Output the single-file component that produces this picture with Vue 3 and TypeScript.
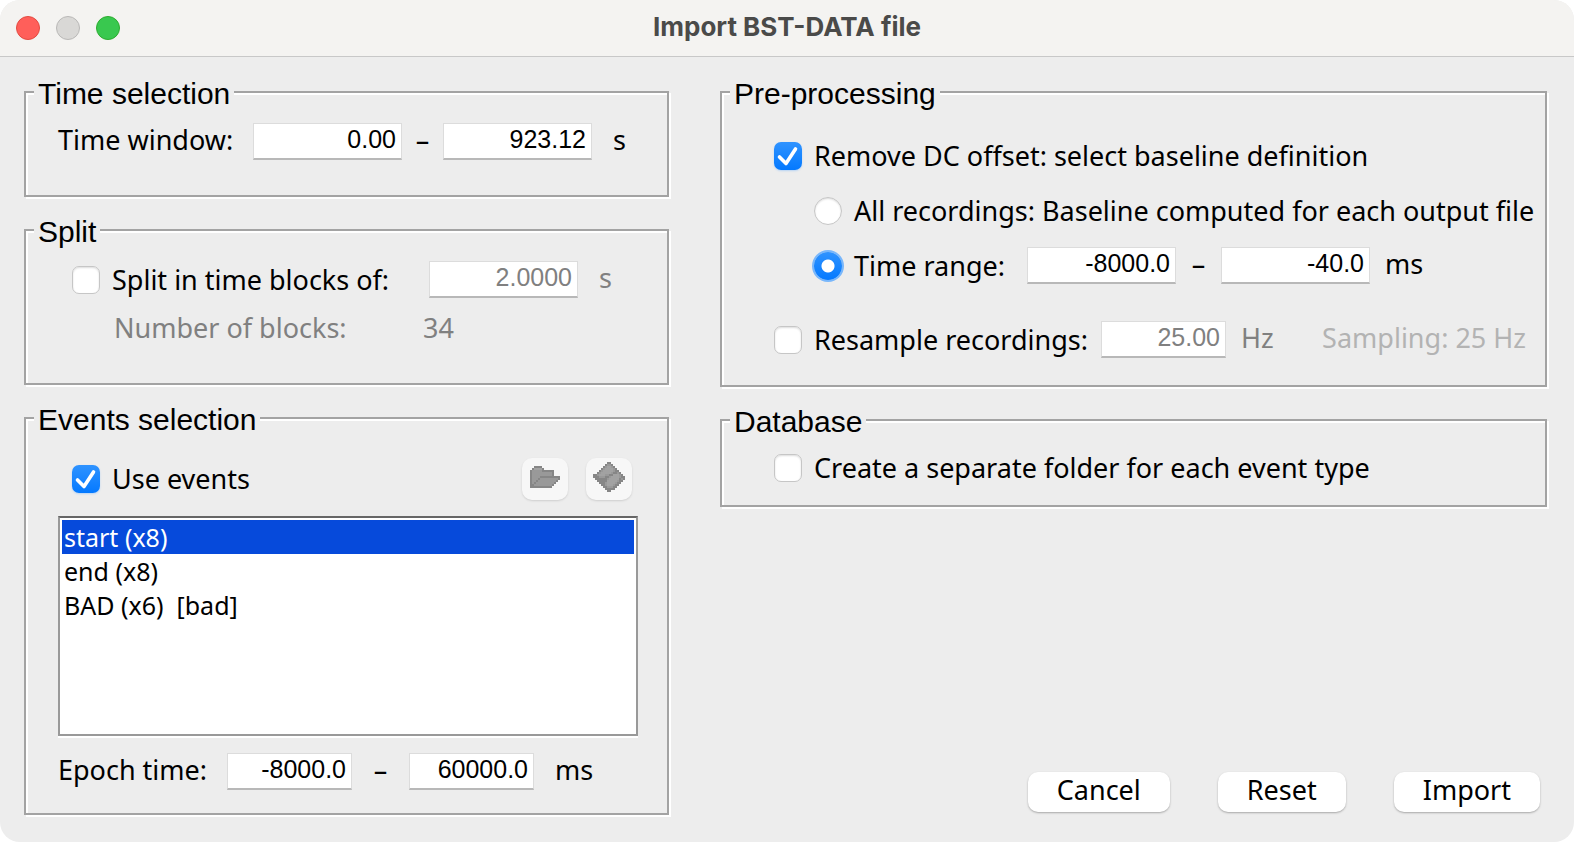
<script setup lang="ts">
import { reactive } from 'vue'

const form = reactive({
  timeStart: '0.00',
  timeEnd: '923.12',
  split: false,
  blockLength: '2.0000',
  blockCount: 34,
  useEvents: true,
  selectedEvents: ['start'],
  epochStart: '-8000.0',
  epochEnd: '60000.0',
  removeDc: true,
  baseline: 'range',
  baselineStart: '-8000.0',
  baselineEnd: '-40.0',
  resample: false,
  rate: '25.00',
  separateFolders: false,
})

const events = [
  { id: 'start', label: 'start (x8)' },
  { id: 'end', label: 'end (x8)' },
  { id: 'bad', label: 'BAD (x6)\u00a0 [bad]' },
]

interface Pixel {
  x: number
  y: number
  tone: string
}

// d = outline, m = body, l = highlight
function toPixels(rows: string[]): Pixel[] {
  return rows.flatMap((row, y) =>
    [...row].map((tone, x) => ({ x, y, tone })).filter((p) => p.tone !== '.'),
  )
}

const folderIcon = toPixels([
  '..dddd.........',
  '.dlllld........',
  'dmmmmmdddddd...',
  'dmmmmmmmmmmd...',
  'dmmmmmmmmmmd...',
  'dmmmmdddddddddd',
  'dmmmdmmmmmmmmmd',
  'dmmdmmmmmmmmmd.',
  'dmdmmmmmmmmmd..',
  'ddmmmmmmmmmd...',
  'ddddddddddd....',
])

const matrixIcon = toPixels([
  '.......dd.......',
  '......dmmd......',
  '.....dmllmd.....',
  '....dmllllmd....',
  '...dmlllllmdd...',
  '..dmlllllmddmd..',
  'ddmlllmmddlllmd.',
  'dddmmmddmllllmdd',
  '.ddddddmllllldmd',
  '..dddddlllllmdd.',
  '...dddmllllmdd..',
  '....ddmlllmdd...',
  '.....ddmmmdd....',
  '......ddddd.....',
  '.......dd.......',
])
</script>

<template>
  <div class="window">
    <header class="titlebar">
      <div class="lights">
        <button type="button" class="light close" aria-label="Close"></button>
        <button type="button" class="light minimize" aria-label="Minimize" disabled></button>
        <button type="button" class="light zoom" aria-label="Zoom"></button>
      </div>
      <h1>Import BST-DATA file</h1>
    </header>

    <main class="content">
      <div class="column">
        <fieldset class="group time-group">
          <legend>Time selection</legend>
          <div class="row">
            <label class="time-label" for="time-start">Time window:</label>
            <input id="time-start" v-model="form.timeStart" class="field" type="text" />
            <span class="dash">–</span>
            <input v-model="form.timeEnd" class="field" type="text" aria-label="Time window end" />
            <span class="unit far">s</span>
          </div>
        </fieldset>

        <fieldset class="group split-group">
          <legend>Split</legend>
          <div class="row indent">
            <span class="tick">
              <input id="split" v-model="form.split" type="checkbox" />
              <svg viewBox="0 0 28 28"><path d="M5.5 15 L12 21.5 L21.5 7" /></svg>
            </span>
            <label class="split-label" for="split">Split in time blocks of:</label>
            <input v-model="form.blockLength" class="field" type="text" aria-label="Block length" disabled />
            <span class="unit far muted">s</span>
          </div>
          <div class="row count muted">
            <span class="count-label">Number of blocks:</span>
            <output>{{ form.blockCount }}</output>
          </div>
        </fieldset>

        <fieldset class="group events-group">
          <legend>Events selection</legend>
          <div class="row events-head indent">
            <span class="tick">
              <input id="use-events" v-model="form.useEvents" type="checkbox" />
              <svg viewBox="0 0 28 28"><path d="M5.5 15 L12 21.5 L21.5 7" /></svg>
            </span>
            <label for="use-events">Use events</label>
            <div class="tools">
              <button type="button" class="tool" aria-label="Open events file" disabled>
                <svg class="pixels" width="30" height="22" viewBox="0 0 15 11">
                  <rect v-for="p in folderIcon" :key="`${p.x}-${p.y}`" :class="p.tone" :x="p.x" :y="p.y" width="1" height="1" />
                </svg>
              </button>
              <button type="button" class="tool" aria-label="Import from Matlab" disabled>
                <svg class="pixels" width="32" height="30" viewBox="0 0 16 15">
                  <rect v-for="p in matrixIcon" :key="`${p.x}-${p.y}`" :class="p.tone" :x="p.x" :y="p.y" width="1" height="1" />
                </svg>
              </button>
            </div>
          </div>
          <select v-model="form.selectedEvents" class="list" multiple aria-label="Events">
            <option v-for="e in events" :key="e.id" :value="e.id">{{ e.label }}</option>
          </select>
          <div class="row">
            <label class="epoch-label" for="epoch-start">Epoch time:</label>
            <input id="epoch-start" v-model="form.epochStart" class="field short" type="text" />
            <span class="dash wide">–</span>
            <input v-model="form.epochEnd" class="field short" type="text" aria-label="Epoch time end" />
            <span class="unit far">ms</span>
          </div>
        </fieldset>
      </div>

      <div class="column">
        <fieldset class="group pre-group">
          <legend>Pre-processing</legend>
          <div class="row">
            <span class="tick">
              <input id="remove-dc" v-model="form.removeDc" type="checkbox" />
              <svg viewBox="0 0 28 28"><path d="M5.5 15 L12 21.5 L21.5 7" /></svg>
            </span>
            <label for="remove-dc">Remove DC offset: select baseline definition</label>
          </div>
          <div class="row nested">
            <input id="base-all" v-model="form.baseline" class="radio" type="radio" name="baseline" value="all" />
            <label for="base-all">All recordings: Baseline computed for each output file</label>
          </div>
          <div class="row nested">
            <input id="base-range" v-model="form.baseline" class="radio" type="radio" name="baseline" value="range" />
            <label class="range-label" for="base-range">Time range:</label>
            <input v-model="form.baselineStart" class="field" type="text" aria-label="Baseline start" />
            <span class="dash">–</span>
            <input v-model="form.baselineEnd" class="field" type="text" aria-label="Baseline end" />
            <span class="unit">ms</span>
          </div>
          <div class="row resample">
            <span class="tick">
              <input id="resample" v-model="form.resample" type="checkbox" />
              <svg viewBox="0 0 28 28"><path d="M5.5 15 L12 21.5 L21.5 7" /></svg>
            </span>
            <label class="resample-label" for="resample">Resample recordings:</label>
            <input v-model="form.rate" class="field short" type="text" aria-label="New sampling rate" disabled />
            <span class="unit muted">Hz</span>
            <span class="sampling">Sampling: 25 Hz</span>
          </div>
        </fieldset>

        <fieldset class="group database-group">
          <legend>Database</legend>
          <div class="row">
            <span class="tick">
              <input id="folders" v-model="form.separateFolders" type="checkbox" />
              <svg viewBox="0 0 28 28"><path d="M5.5 15 L12 21.5 L21.5 7" /></svg>
            </span>
            <label for="folders">Create a separate folder for each event type</label>
          </div>
        </fieldset>

        <footer class="actions">
          <button type="button" class="push">Cancel</button>
          <button type="button" class="push">Reset</button>
          <button type="button" class="push">Import</button>
        </footer>
      </div>
    </main>
  </div>
</template>

<style>
body {
  margin: 0;
  background: #fff;
}
</style>

<style scoped>
* {
  box-sizing: border-box;
}

.window {
  display: flex;
  flex-direction: column;
  min-height: 100vh;
  border-radius: 20px;
  overflow: hidden;
  background: #ededed;
  color: #000;
  font-family: "Noto Sans", "Open Sans", sans-serif;
  font-size: 27px;
  line-height: 32px;
}

.titlebar {
  display: grid;
  grid-template-columns: 1fr auto 1fr;
  align-items: center;
  height: 57px;
  padding: 0 16px;
  background: #f4f3f1;
  border-bottom: 1px solid #c8c8c8;
}

.titlebar h1 {
  margin: 0;
  padding-bottom: 2px;
  font-family: Inter, sans-serif;
  font-size: 26px;
  font-weight: 700;
  color: #4a4a49;
}

.lights {
  display: flex;
  gap: 16px;
}

.light {
  width: 24px;
  height: 24px;
  padding: 0;
  border: 1px solid;
  border-radius: 50%;
}

.close {
  background: #ff5f5a;
  border-color: #e24b41;
}

.minimize {
  background: #d9d8d6;
  border-color: #b9b8b7;
}

.zoom {
  background: #39c84f;
  border-color: #2dac2f;
}

.content {
  flex: 1;
  display: grid;
  grid-template-columns: 645fr 827fr;
  column-gap: 51px;
  padding: 17px 27px 27px 24px;
}

.column {
  display: flex;
  flex-direction: column;
  gap: 15px;
  min-width: 0;
}

.group {
  min-width: 0;
  margin: 0;
  border: 2px solid #a3a3a3;
  box-shadow: inset 2px 2px 0 #fff, 2px 2px 0 #fff;
}

.group legend {
  margin: 0;
  padding: 4px 4px 0;
  background: #ededed;
  font-family: "Liberation Sans", Arial, sans-serif;
  font-size: 30px;
  line-height: 32px;
}

.time-group {
  padding: 13px 8px 35px;
}

.split-group {
  padding: 13px 8px 39px;
}

.events-group {
  padding: 22px 8px 23px;
}

.pre-group {
  padding: 27px 8px 27px;
}

.database-group {
  padding: 11px 8px 19px;
}

.row {
  display: flex;
  align-items: center;
  height: 37px;
  padding-left: 24px;
  white-space: nowrap;
}

.pre-group .row,
.database-group .row {
  padding-left: 44px;
}

.row.indent {
  padding-left: 38px;
}

.pre-group .nested {
  margin-top: 18px;
  padding-left: 84px;
}

.pre-group .resample {
  margin-top: 37px;
}

.count {
  height: 32px;
  margin-top: 14px;
  padding-left: 80px;
}

.count-label {
  width: 309px;
}

.time-label,
.epoch-label,
.dash,
.unit {
  padding-bottom: 4px;
}

.time-label {
  width: 195px;
}

.split-label {
  width: 317px;
}

.epoch-label {
  width: 169px;
}

.range-label {
  width: 173px;
}

.resample-label {
  width: 287px;
}

.field {
  width: 149px;
  height: 37px;
  padding: 0 5px 4px;
  border: 1px solid #dcdcdc;
  border-bottom: 2px solid #b8b8b8;
  border-radius: 0;
  background: #fff;
  color: #000;
  font-family: "Liberation Sans", Arial, sans-serif;
  font-size: 25px;
  text-align: right;
}

.field.short {
  width: 125px;
}

.field:disabled {
  color: #808080;
}

.dash {
  width: 41px;
  text-align: center;
}

.pre-group .dash {
  width: 45px;
}

.dash.wide {
  width: 57px;
}

.unit {
  margin-left: 15px;
}

.unit.far {
  margin-left: 21px;
}

.muted {
  color: #808080;
}

.sampling {
  margin-left: auto;
  padding: 0 11px 4px 0;
  color: #b3b3b3;
}

.tick {
  display: grid;
  flex: none;
  width: 28px;
  height: 28px;
  margin-right: 12px;
}

.tick > * {
  grid-area: 1 / 1;
}

.tick input,
.radio {
  appearance: none;
  flex: none;
  width: 28px;
  height: 28px;
  margin: 0;
  border: 1px solid #c6c6c6;
  border-radius: 7px;
  background: #fff;
  box-shadow: inset 0 1px 2px #dcdcdc;
}

.tick input:checked {
  border: 0;
  background: linear-gradient(#2f93ff, #0479ff);
  box-shadow: 0 1px 2px #b8d4f4;
}

.tick svg {
  visibility: hidden;
  pointer-events: none;
}

.tick input:checked + svg {
  visibility: visible;
}

.tick path {
  fill: none;
  stroke: #fff;
  stroke-width: 3.6;
  stroke-linecap: round;
  stroke-linejoin: round;
}

.radio {
  margin-right: 12px;
  border-radius: 50%;
}

.radio:checked {
  border: 0;
  background:
    radial-gradient(circle, #fff 6px, transparent 7px),
    linear-gradient(#2f93ff, #0479ff);
  box-shadow: 0 0 0 2px #79b7fb;
}

.events-head {
  height: 42px;
}

.tools {
  display: flex;
  gap: 18px;
  margin-left: auto;
  padding-right: 27px;
}

.tool {
  display: flex;
  align-items: center;
  justify-content: center;
  width: 46px;
  height: 42px;
  padding: 0 0 4px;
  border: 0;
  border-radius: 10px;
  background: #f7f7f7;
  box-shadow: 0 1px 2px #cfcfcf;
}

.pixels {
  shape-rendering: crispEdges;
}

.d {
  fill: #868686;
}

.m {
  fill: #999;
}

.l {
  fill: #a2a2a2;
}

.list {
  display: block;
  width: calc(100% - 45px);
  height: 220px;
  margin: 16px 0 17px 24px;
  padding: 2px;
  border: 2px solid #999;
  border-top-color: #666;
  border-radius: 0;
  outline: 0;
  background: #fff;
  box-shadow: 0 2px 0 #fff;
  font-family: inherit;
  font-size: 25px;
  overflow: hidden;
}

.list option {
  min-height: 34px;
  padding: 0 2px;
  line-height: 34px;
}

.list option:checked {
  background: linear-gradient(#064adb, #064adb);
  -webkit-text-fill-color: #fff;
}

.actions {
  display: flex;
  justify-content: flex-end;
  gap: 48px;
  margin-top: auto;
  padding: 0 7px 3px;
}

.push {
  height: 40px;
  padding: 0 29px 4px;
  border: 0;
  border-radius: 10px;
  background: #fff;
  box-shadow: 0 1px 2px #a8a8a8;
  color: #000;
  font-family: inherit;
  font-size: 27px;
  line-height: 32px;
}
</style>
